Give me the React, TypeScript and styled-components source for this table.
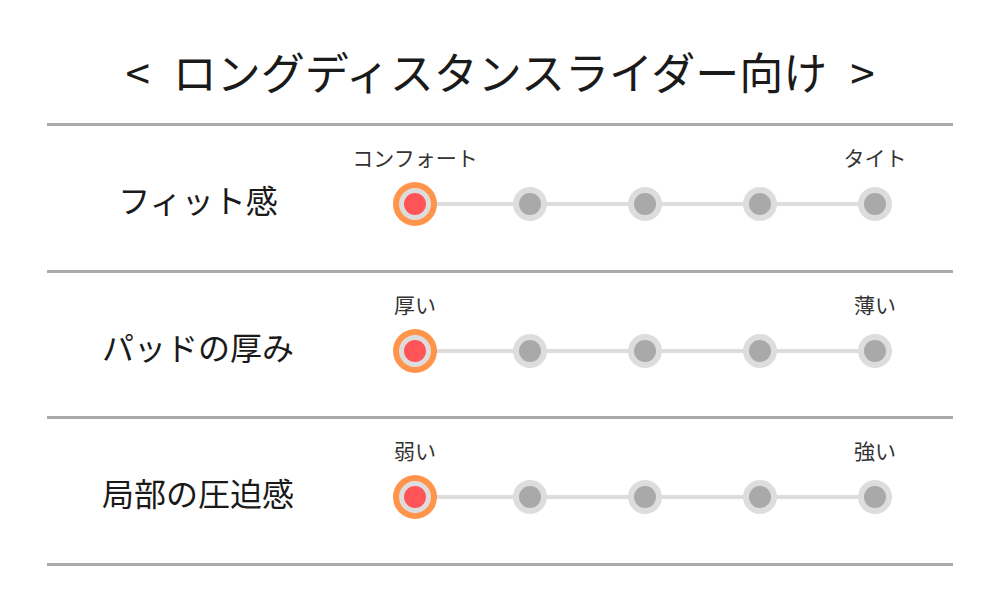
import React from "react";
import styled, { createGlobalStyle } from "styled-components";

const GlobalStyle = createGlobalStyle`
  body {
    margin: 0;
    background: #ffffff;
    font-family: "Noto Sans CJK JP", "Noto Sans", sans-serif;
    color: #1a1a1a;
  }
`;

const Page = styled.div`
  width: 1000px;
  height: 600px;
  padding: 0 47px;
  box-sizing: border-box;
`;

const Title = styled.h1`
  margin: 0;
  height: 126px;
  padding-top: 18px;
  box-sizing: border-box;
  display: flex;
  align-items: center;
  justify-content: center;
  gap: 23px;
  font-size: 44px;
  font-weight: 400;
  line-height: 1;
  border-bottom: 3px solid #aaaaaa;
`;

const Bracket = styled.span`
  font-size: 44px;
`;

const Row = styled.div`
  height: 143.5px;
  display: grid;
  grid-template-columns: 302px 575px;
  column-gap: 8.5px;
  border-bottom: 3px solid #aaaaaa;
`;

const RowLabel = styled.div`
  align-self: center;
  margin-top: 3px;
  text-align: center;
  font-size: 32px;
  line-height: 1;
`;

const Slider = styled.div`
  padding-top: 20px;
  display: flex;
  flex-direction: column;
  gap: 14px;
`;

const EndLabels = styled.div`
  display: grid;
  grid-template-columns: repeat(5, 115px);
  height: 22px;
  font-size: 21px;
  line-height: 22px;
  color: #333333;
`;

const EndLabel = styled.span<{ $col: number }>`
  grid-column: ${(p) => p.$col};
  display: flex;
  justify-content: center;
  white-space: nowrap;
`;

const Track = styled.div`
  display: grid;
  grid-template-columns: repeat(5, 115px);
  height: 44px;
  align-items: center;
  justify-items: center;
  background: linear-gradient(#dddddd, #dddddd) center / calc(100% - 115px)
    4px no-repeat;
`;

const Dot = styled.div<{ $active?: boolean }>`
  box-sizing: border-box;
  width: ${(p) => (p.$active ? "32px" : "34px")};
  height: ${(p) => (p.$active ? "32px" : "34px")};
  border-radius: 50%;
  background: ${(p) => (p.$active ? "#ff5559" : "#a9a9a9")};
  border: ${(p) => (p.$active ? "5px" : "6px")} solid #dddddd;
  box-shadow: ${(p) => (p.$active ? "0 0 0 6px #ff944a" : "none")};
`;

const rows = [
  { label: "フィット感", left: "コンフォート", right: "タイト" },
  { label: "パッドの厚み", left: "厚い", right: "薄い" },
  { label: "局部の圧迫感", left: "弱い", right: "強い" },
];

const App = () => {
  return (
    <Page>
      <GlobalStyle />
      <Title>
        <Bracket>&lt;</Bracket>
        <span>ロングディスタンスライダー向け</span>
        <Bracket>&gt;</Bracket>
      </Title>
      {rows.map((row) => (
        <Row key={row.label}>
          <RowLabel>{row.label}</RowLabel>
          <Slider>
            <EndLabels>
              <EndLabel $col={1}>{row.left}</EndLabel>
              <EndLabel $col={5}>{row.right}</EndLabel>
            </EndLabels>
            <Track>
              {[0, 1, 2, 3, 4].map((i) => (
                <Dot key={i} $active={i === 0} />
              ))}
            </Track>
          </Slider>
        </Row>
      ))}
    </Page>
  );
};

export default App;
